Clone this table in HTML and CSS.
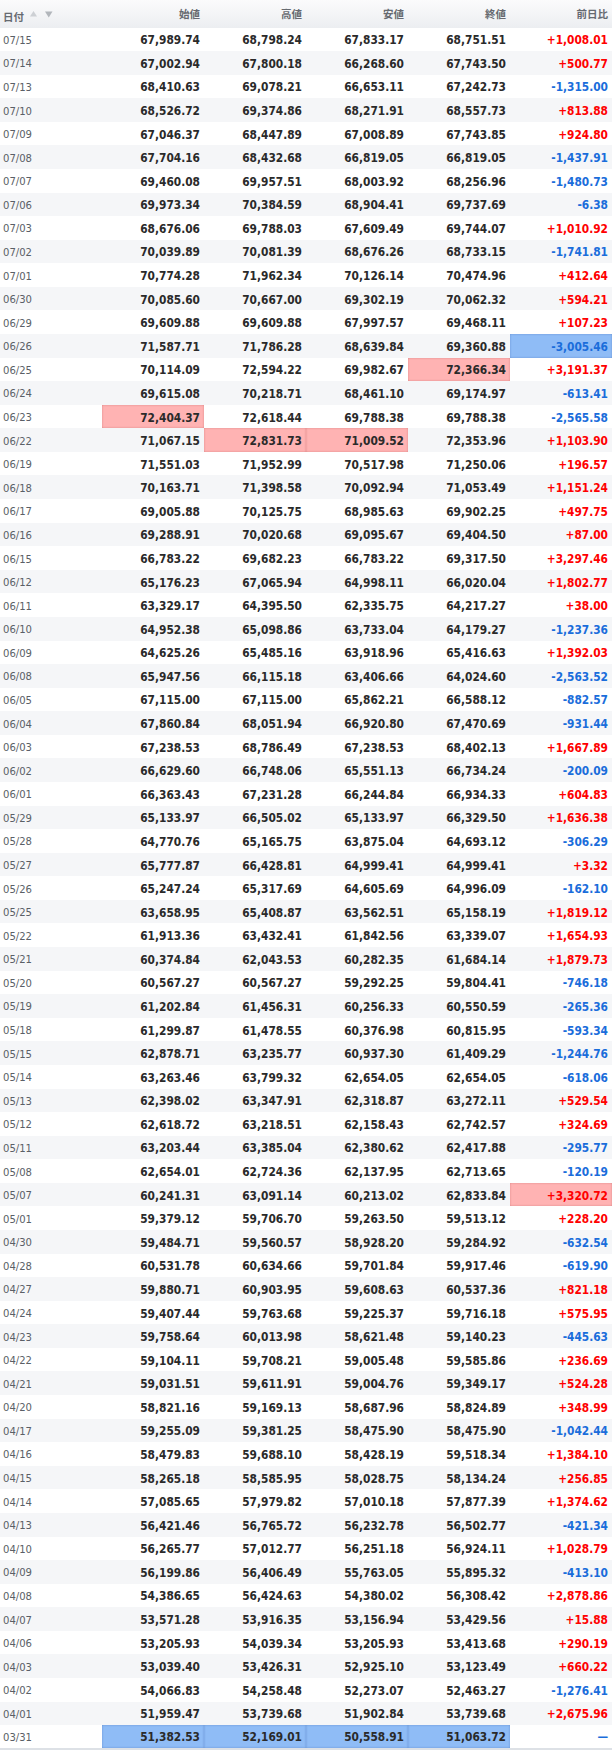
FILE: index.html
```html
<!DOCTYPE html>
<html lang="ja">
<head>
<meta charset="utf-8">
<title>株価履歴</title>
<link rel="stylesheet" href="styles.css">
</head>
<body>
<table class="hist">
<thead>
<tr>
<th class="c-date"><span class="hd">日付</span><svg class="sort" width="23" height="7" viewBox="0 0 23 7"><polygon class="asc" points="3.5,0 7,5.5 0,5.5"/><polygon class="desc" points="15,0.5 22.5,0.5 18.75,6.5"/></svg></th>
<th>始値</th><th>高値</th><th>安値</th><th>終値</th><th>前日比</th>
</tr>
</thead>
<tbody>
<tr><td class="d">07/15</td><td>67,989.74</td><td>68,798.24</td><td>67,833.17</td><td>68,751.51</td><td class="up">+1,008.01</td></tr>
<tr><td class="d">07/14</td><td>67,002.94</td><td>67,800.18</td><td>66,268.60</td><td>67,743.50</td><td class="up">+500.77</td></tr>
<tr><td class="d">07/13</td><td>68,410.63</td><td>69,078.21</td><td>66,653.11</td><td>67,242.73</td><td class="dn">-1,315.00</td></tr>
<tr><td class="d">07/10</td><td>68,526.72</td><td>69,374.86</td><td>68,271.91</td><td>68,557.73</td><td class="up">+813.88</td></tr>
<tr><td class="d">07/09</td><td>67,046.37</td><td>68,447.89</td><td>67,008.89</td><td>67,743.85</td><td class="up">+924.80</td></tr>
<tr><td class="d">07/08</td><td>67,704.16</td><td>68,432.68</td><td>66,819.05</td><td>66,819.05</td><td class="dn">-1,437.91</td></tr>
<tr><td class="d">07/07</td><td>69,460.08</td><td>69,957.51</td><td>68,003.92</td><td>68,256.96</td><td class="dn">-1,480.73</td></tr>
<tr><td class="d">07/06</td><td>69,973.34</td><td>70,384.59</td><td>68,904.41</td><td>69,737.69</td><td class="dn">-6.38</td></tr>
<tr><td class="d">07/03</td><td>68,676.06</td><td>69,788.03</td><td>67,609.49</td><td>69,744.07</td><td class="up">+1,010.92</td></tr>
<tr><td class="d">07/02</td><td>70,039.89</td><td>70,081.39</td><td>68,676.26</td><td>68,733.15</td><td class="dn">-1,741.81</td></tr>
<tr><td class="d">07/01</td><td>70,774.28</td><td>71,962.34</td><td>70,126.14</td><td>70,474.96</td><td class="up">+412.64</td></tr>
<tr><td class="d">06/30</td><td>70,085.60</td><td>70,667.00</td><td>69,302.19</td><td>70,062.32</td><td class="up">+594.21</td></tr>
<tr><td class="d">06/29</td><td>69,609.88</td><td>69,609.88</td><td>67,997.57</td><td>69,468.11</td><td class="up">+107.23</td></tr>
<tr><td class="d">06/26</td><td>71,587.71</td><td>71,786.28</td><td>68,639.84</td><td>69,360.88</td><td class="dn hb">-3,005.46</td></tr>
<tr><td class="d">06/25</td><td>70,114.09</td><td>72,594.22</td><td>69,982.67</td><td class="hr">72,366.34</td><td class="up">+3,191.37</td></tr>
<tr><td class="d">06/24</td><td>69,615.08</td><td>70,218.71</td><td>68,461.10</td><td>69,174.97</td><td class="dn">-613.41</td></tr>
<tr><td class="d">06/23</td><td class="hr">72,404.37</td><td>72,618.44</td><td>69,788.38</td><td>69,788.38</td><td class="dn">-2,565.58</td></tr>
<tr><td class="d">06/22</td><td>71,067.15</td><td class="hr">72,831.73</td><td class="hr">71,009.52</td><td>72,353.96</td><td class="up">+1,103.90</td></tr>
<tr><td class="d">06/19</td><td>71,551.03</td><td>71,952.99</td><td>70,517.98</td><td>71,250.06</td><td class="up">+196.57</td></tr>
<tr><td class="d">06/18</td><td>70,163.71</td><td>71,398.58</td><td>70,092.94</td><td>71,053.49</td><td class="up">+1,151.24</td></tr>
<tr><td class="d">06/17</td><td>69,005.88</td><td>70,125.75</td><td>68,985.63</td><td>69,902.25</td><td class="up">+497.75</td></tr>
<tr><td class="d">06/16</td><td>69,288.91</td><td>70,020.68</td><td>69,095.67</td><td>69,404.50</td><td class="up">+87.00</td></tr>
<tr><td class="d">06/15</td><td>66,783.22</td><td>69,682.23</td><td>66,783.22</td><td>69,317.50</td><td class="up">+3,297.46</td></tr>
<tr><td class="d">06/12</td><td>65,176.23</td><td>67,065.94</td><td>64,998.11</td><td>66,020.04</td><td class="up">+1,802.77</td></tr>
<tr><td class="d">06/11</td><td>63,329.17</td><td>64,395.50</td><td>62,335.75</td><td>64,217.27</td><td class="up">+38.00</td></tr>
<tr><td class="d">06/10</td><td>64,952.38</td><td>65,098.86</td><td>63,733.04</td><td>64,179.27</td><td class="dn">-1,237.36</td></tr>
<tr><td class="d">06/09</td><td>64,625.26</td><td>65,485.16</td><td>63,918.96</td><td>65,416.63</td><td class="up">+1,392.03</td></tr>
<tr><td class="d">06/08</td><td>65,947.56</td><td>66,115.18</td><td>63,406.66</td><td>64,024.60</td><td class="dn">-2,563.52</td></tr>
<tr><td class="d">06/05</td><td>67,115.00</td><td>67,115.00</td><td>65,862.21</td><td>66,588.12</td><td class="dn">-882.57</td></tr>
<tr><td class="d">06/04</td><td>67,860.84</td><td>68,051.94</td><td>66,920.80</td><td>67,470.69</td><td class="dn">-931.44</td></tr>
<tr><td class="d">06/03</td><td>67,238.53</td><td>68,786.49</td><td>67,238.53</td><td>68,402.13</td><td class="up">+1,667.89</td></tr>
<tr><td class="d">06/02</td><td>66,629.60</td><td>66,748.06</td><td>65,551.13</td><td>66,734.24</td><td class="dn">-200.09</td></tr>
<tr><td class="d">06/01</td><td>66,363.43</td><td>67,231.28</td><td>66,244.84</td><td>66,934.33</td><td class="up">+604.83</td></tr>
<tr><td class="d">05/29</td><td>65,133.97</td><td>66,505.02</td><td>65,133.97</td><td>66,329.50</td><td class="up">+1,636.38</td></tr>
<tr><td class="d">05/28</td><td>64,770.76</td><td>65,165.75</td><td>63,875.04</td><td>64,693.12</td><td class="dn">-306.29</td></tr>
<tr><td class="d">05/27</td><td>65,777.87</td><td>66,428.81</td><td>64,999.41</td><td>64,999.41</td><td class="up">+3.32</td></tr>
<tr><td class="d">05/26</td><td>65,247.24</td><td>65,317.69</td><td>64,605.69</td><td>64,996.09</td><td class="dn">-162.10</td></tr>
<tr><td class="d">05/25</td><td>63,658.95</td><td>65,408.87</td><td>63,562.51</td><td>65,158.19</td><td class="up">+1,819.12</td></tr>
<tr><td class="d">05/22</td><td>61,913.36</td><td>63,432.41</td><td>61,842.56</td><td>63,339.07</td><td class="up">+1,654.93</td></tr>
<tr><td class="d">05/21</td><td>60,374.84</td><td>62,043.53</td><td>60,282.35</td><td>61,684.14</td><td class="up">+1,879.73</td></tr>
<tr><td class="d">05/20</td><td>60,567.27</td><td>60,567.27</td><td>59,292.25</td><td>59,804.41</td><td class="dn">-746.18</td></tr>
<tr><td class="d">05/19</td><td>61,202.84</td><td>61,456.31</td><td>60,256.33</td><td>60,550.59</td><td class="dn">-265.36</td></tr>
<tr><td class="d">05/18</td><td>61,299.87</td><td>61,478.55</td><td>60,376.98</td><td>60,815.95</td><td class="dn">-593.34</td></tr>
<tr><td class="d">05/15</td><td>62,878.71</td><td>63,235.77</td><td>60,937.30</td><td>61,409.29</td><td class="dn">-1,244.76</td></tr>
<tr><td class="d">05/14</td><td>63,263.46</td><td>63,799.32</td><td>62,654.05</td><td>62,654.05</td><td class="dn">-618.06</td></tr>
<tr><td class="d">05/13</td><td>62,398.02</td><td>63,347.91</td><td>62,318.87</td><td>63,272.11</td><td class="up">+529.54</td></tr>
<tr><td class="d">05/12</td><td>62,618.72</td><td>63,218.51</td><td>62,158.43</td><td>62,742.57</td><td class="up">+324.69</td></tr>
<tr><td class="d">05/11</td><td>63,203.44</td><td>63,385.04</td><td>62,380.62</td><td>62,417.88</td><td class="dn">-295.77</td></tr>
<tr><td class="d">05/08</td><td>62,654.01</td><td>62,724.36</td><td>62,137.95</td><td>62,713.65</td><td class="dn">-120.19</td></tr>
<tr><td class="d">05/07</td><td>60,241.31</td><td>63,091.14</td><td>60,213.02</td><td>62,833.84</td><td class="up hr">+3,320.72</td></tr>
<tr><td class="d">05/01</td><td>59,379.12</td><td>59,706.70</td><td>59,263.50</td><td>59,513.12</td><td class="up">+228.20</td></tr>
<tr><td class="d">04/30</td><td>59,484.71</td><td>59,560.57</td><td>58,928.20</td><td>59,284.92</td><td class="dn">-632.54</td></tr>
<tr><td class="d">04/28</td><td>60,531.78</td><td>60,634.66</td><td>59,701.84</td><td>59,917.46</td><td class="dn">-619.90</td></tr>
<tr><td class="d">04/27</td><td>59,880.71</td><td>60,903.95</td><td>59,608.63</td><td>60,537.36</td><td class="up">+821.18</td></tr>
<tr><td class="d">04/24</td><td>59,407.44</td><td>59,763.68</td><td>59,225.37</td><td>59,716.18</td><td class="up">+575.95</td></tr>
<tr><td class="d">04/23</td><td>59,758.64</td><td>60,013.98</td><td>58,621.48</td><td>59,140.23</td><td class="dn">-445.63</td></tr>
<tr><td class="d">04/22</td><td>59,104.11</td><td>59,708.21</td><td>59,005.48</td><td>59,585.86</td><td class="up">+236.69</td></tr>
<tr><td class="d">04/21</td><td>59,031.51</td><td>59,611.91</td><td>59,004.76</td><td>59,349.17</td><td class="up">+524.28</td></tr>
<tr><td class="d">04/20</td><td>58,821.16</td><td>59,169.13</td><td>58,687.96</td><td>58,824.89</td><td class="up">+348.99</td></tr>
<tr><td class="d">04/17</td><td>59,255.09</td><td>59,381.25</td><td>58,475.90</td><td>58,475.90</td><td class="dn">-1,042.44</td></tr>
<tr><td class="d">04/16</td><td>58,479.83</td><td>59,688.10</td><td>58,428.19</td><td>59,518.34</td><td class="up">+1,384.10</td></tr>
<tr><td class="d">04/15</td><td>58,265.18</td><td>58,585.95</td><td>58,028.75</td><td>58,134.24</td><td class="up">+256.85</td></tr>
<tr><td class="d">04/14</td><td>57,085.65</td><td>57,979.82</td><td>57,010.18</td><td>57,877.39</td><td class="up">+1,374.62</td></tr>
<tr><td class="d">04/13</td><td>56,421.46</td><td>56,765.72</td><td>56,232.78</td><td>56,502.77</td><td class="dn">-421.34</td></tr>
<tr><td class="d">04/10</td><td>56,265.77</td><td>57,012.77</td><td>56,251.18</td><td>56,924.11</td><td class="up">+1,028.79</td></tr>
<tr><td class="d">04/09</td><td>56,199.86</td><td>56,406.49</td><td>55,763.05</td><td>55,895.32</td><td class="dn">-413.10</td></tr>
<tr><td class="d">04/08</td><td>54,386.65</td><td>56,424.63</td><td>54,380.02</td><td>56,308.42</td><td class="up">+2,878.86</td></tr>
<tr><td class="d">04/07</td><td>53,571.28</td><td>53,916.35</td><td>53,156.94</td><td>53,429.56</td><td class="up">+15.88</td></tr>
<tr><td class="d">04/06</td><td>53,205.93</td><td>54,039.34</td><td>53,205.93</td><td>53,413.68</td><td class="up">+290.19</td></tr>
<tr><td class="d">04/03</td><td>53,039.40</td><td>53,426.31</td><td>52,925.10</td><td>53,123.49</td><td class="up">+660.22</td></tr>
<tr><td class="d">04/02</td><td>54,066.83</td><td>54,258.48</td><td>52,273.07</td><td>52,463.27</td><td class="dn">-1,276.41</td></tr>
<tr><td class="d">04/01</td><td>51,959.47</td><td>53,739.68</td><td>51,902.84</td><td>53,739.68</td><td class="up">+2,675.96</td></tr>
<tr><td class="d">03/31</td><td class="hb">51,382.53</td><td class="hb">52,169.01</td><td class="hb">50,558.91</td><td class="hb">51,063.72</td><td class="dn">—</td></tr>
</tbody>
</table>
</body>
</html>
```
FILE: styles.css
```css
html, body {
  margin: 0;
  padding: 0;
  background: #ffffff;
}

.hist {
  width: 612px;
  border-collapse: collapse;
  table-layout: fixed;
  font-family: "DejaVu Sans Condensed", "DejaVu Sans", sans-serif;
  font-stretch: condensed;
  border-bottom: 2px solid #dde1e6;
}

.hist th {
  height: 27.5px;
  padding: 0 4px 1px 0;
  box-sizing: border-box;
  text-align: right;
  vertical-align: middle;
  font-family: "Noto Sans CJK JP", sans-serif;
  font-weight: bold;
  font-size: 10.5px;
  color: #666a70;
  background: linear-gradient(#fbfbfc, #eceef1);
  width: 102px;
}

.hist th.c-date {
  text-align: left;
  padding: 3px 0 0 3px;
}

.hd {
  vertical-align: middle;
}

.sort {
  vertical-align: middle;
  margin: 0 0 3px 6px;
}

.sort .asc { fill: #cdd0d4; }
.sort .desc { fill: #b2b6bb; }

.hist td {
  height: 23.58px;
  padding: 2px 4px 0 0;
  box-sizing: border-box;
  text-align: right;
  vertical-align: middle;
  font-weight: bold;
  font-size: 11.8px;
  color: #2a2a2a;
  white-space: nowrap;
}

.hist tbody tr:nth-child(even) td {
  background: #f5f6f8;
}

.hist td.d {
  text-align: left;
  padding-left: 3px;
  font-weight: normal;
  font-size: 11.2px;
  color: #5a5f66;
}

.hist td.up { color: #ff0000; }
.hist td.dn { color: #1a6ddb; }

.hist tbody tr td.hr {
  background: #ffb3b3;
  box-shadow: inset 0 0 2px rgba(160, 60, 60, 0.45);
}

.hist tbody tr td.hb {
  background: #8fbcf6;
  box-shadow: inset 0 0 2px rgba(40, 80, 150, 0.45);
}
```
